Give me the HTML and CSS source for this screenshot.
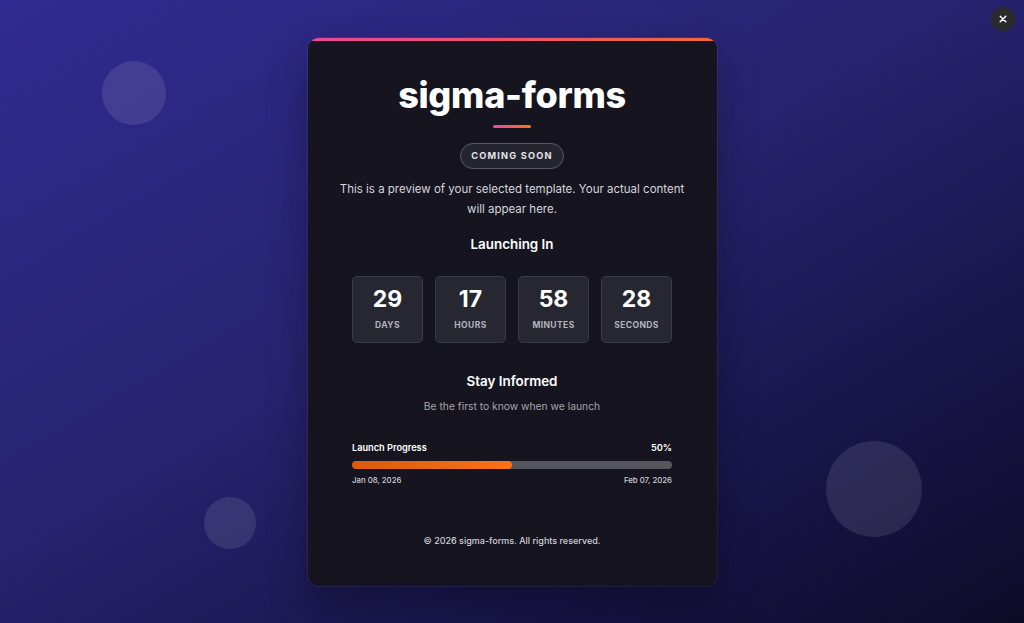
FILE: index.html
```html
<!DOCTYPE html>
<html lang="en">
<head>
<meta charset="utf-8">
<title>sigma-forms — Coming Soon</title>
<link rel="stylesheet" href="styles.css">
</head>
<body>
<div class="stage">
  <span class="bubble bubble-a"></span>
  <span class="bubble bubble-b"></span>
  <span class="bubble bubble-c"></span>
  <button class="close" aria-label="Close">
    <svg viewBox="0 0 10 10" width="8" height="8"><path d="M1.5 1.5 L8.5 8.5 M8.5 1.5 L1.5 8.5" stroke="#fff" stroke-width="1.8" stroke-linecap="round" fill="none"/></svg>
  </button>
  <main class="card">
    <div class="topbar"></div>
    <div class="card-body">
      <h1 class="title">sigma-forms</h1>
      <div class="underline"></div>
      <span class="badge">COMING SOON</span>
      <p class="lead">This is a preview of your selected template. Your actual content will appear here.</p>
      <h2 class="heading">Launching In</h2>
      <div class="countdown">
        <div class="unit"><span class="num">29</span><span class="lbl">DAYS</span></div>
        <div class="unit"><span class="num">17</span><span class="lbl">HOURS</span></div>
        <div class="unit"><span class="num">58</span><span class="lbl">MINUTES</span></div>
        <div class="unit"><span class="num">28</span><span class="lbl">SECONDS</span></div>
      </div>
      <h2 class="heading heading-stay">Stay Informed</h2>
      <p class="sub">Be the first to know when we launch</p>
      <div class="progress">
        <div class="progress-head"><span>Launch Progress</span><span>50%</span></div>
        <div class="track"><div class="fill" style="width:50%"></div></div>
        <div class="progress-dates"><span>Jan 08, 2026</span><span>Feb 07, 2026</span></div>
      </div>
      <p class="footer">© 2026 sigma-forms. All rights reserved.</p>
    </div>
  </main>
</div>
</body>
</html>
```
FILE: styles.css
```css
* { box-sizing: border-box; }
html, body { margin: 0; padding: 0; height: 100%; }
body {
  font-family: Inter, "Noto Sans", "Liberation Sans", sans-serif;
  color: #fff;
  overflow: hidden;
}
.stage {
  position: relative;
  width: 100%;
  height: 100%;
  display: flex;
  align-items: center;
  justify-content: center;
  background: linear-gradient(150deg, #302b90 0%, #27236f 45%, #18154a 75%, #0e0b28 100%);
}
.bubble {
  position: absolute;
  border-radius: 50%;
  background: rgba(255, 255, 255, 0.1);
}
.bubble-a { left: 102px; top: 61px; width: 64px; height: 64px; }
.bubble-b { left: 204px; top: 497px; width: 52px; height: 52px; }
.bubble-c { left: 826px; top: 441px; width: 96px; height: 96px; }
.close {
  position: absolute;
  top: 7px;
  right: 9px;
  width: 24px;
  height: 24px;
  border-radius: 50%;
  border: 0;
  padding: 0;
  background: #2b2b2e;
  display: flex;
  align-items: center;
  justify-content: center;
}
.card {
  position: relative;
  width: 409px;
  height: 548px;
  border-radius: 11px;
  overflow: hidden;
  background: #16151f;
  box-shadow: 0 0 0 1px rgba(255,255,255,0.06), 0 20px 40px rgba(0,0,0,0.3);
}
.topbar {
  height: 3px;
  background: linear-gradient(90deg, #ec4899, #f0506a 50%, #f26a3a);
}
.card-body {
  padding: 30px 28px 0;
  display: flex;
  flex-direction: column;
  align-items: center;
  text-align: center;
}
.title {
  margin: 0;
  font-size: 36px;
  line-height: 48px;
  font-weight: 800;
  letter-spacing: -0.3px;
}
.underline {
  margin-top: 6px;
  width: 38px;
  height: 3px;
  border-radius: 2px;
  background: linear-gradient(90deg, #ec4899, #f97316);
}
.badge {
  margin-top: 15px;
  display: inline-block;
  padding: 5px 10px;
  border: 1px solid #5a5a66;
  border-radius: 13px;
  background: #25252f;
  font-size: 9.2px;
  line-height: 14px;
  font-weight: 700;
  letter-spacing: 1.2px;
  color: #e4e4ea;
}
.lead {
  margin: 10px 0 0;
  font-size: 11.5px;
  line-height: 20px;
  color: #d4d4dc;
}
.heading {
  margin: 14px 0 0;
  font-size: 13.4px;
  line-height: 22px;
  font-weight: 600;
}
.countdown {
  margin-top: 21px;
  width: 320px;
  display: grid;
  grid-template-columns: repeat(4, 1fr);
  gap: 12px;
}
.unit {
  height: 67px;
  border: 1px solid #3a3a47;
  border-radius: 5px;
  background: #272731;
  padding-top: 8px;
  display: flex;
  flex-direction: column;
  align-items: center;
}
.num {
  font-size: 23px;
  line-height: 28px;
  font-weight: 700;
}
.lbl {
  margin-top: 6px;
  font-size: 8.5px;
  line-height: 12px;
  font-weight: 700;
  letter-spacing: 0.4px;
  color: #b4b4bd;
}
.heading-stay { margin-top: 27px; }
.sub {
  margin: 5px 0 0;
  font-size: 10.3px;
  line-height: 18px;
  color: #a3a3ad;
}
.progress {
  margin-top: 25px;
  width: 320px;
}
.progress-head,
.progress-dates {
  display: flex;
  justify-content: space-between;
}
.progress-head {
  font-size: 9.2px;
  line-height: 16px;
  font-weight: 600;
}
.track {
  margin-top: 5px;
  height: 8px;
  border-radius: 4px;
  background: #55555e;
  overflow: hidden;
}
.fill {
  height: 100%;
  border-radius: 4px;
  background: linear-gradient(90deg, #dc5a0a, #f97316);
}
.progress-dates {
  margin-top: 4px;
  font-size: 7.8px;
  line-height: 14px;
  font-weight: 500;
  color: #cfcfd6;
}
.footer {
  margin: 46px 0 0;
  font-size: 9px;
  line-height: 16px;
  font-weight: 500;
  color: #cfcfd6;
}
```
